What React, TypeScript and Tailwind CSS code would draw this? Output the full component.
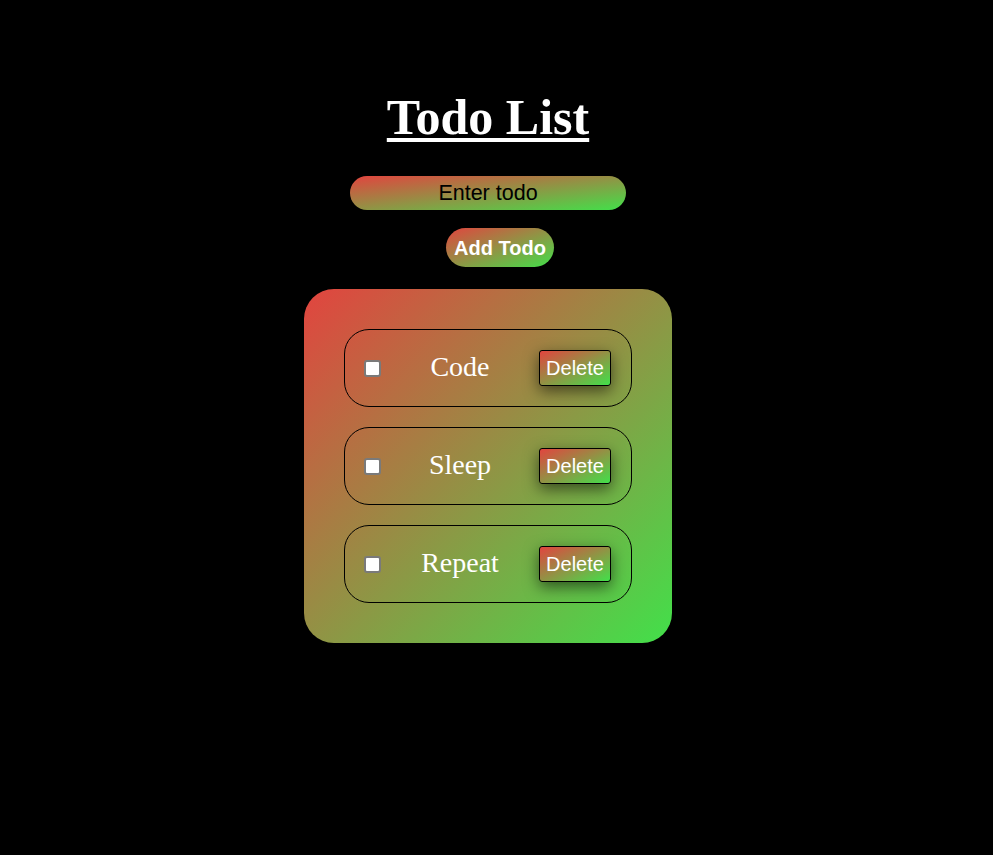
import React from "react";

const items = ["Code", "Sleep", "Repeat"];

export default function App() {
  return (
    <div className="min-h-[855px] w-full bg-black flex flex-col items-center pr-[17px] font-['Liberation_Sans',Arial,sans-serif]">
      <h1 className="mt-[89px] text-white font-bold underline text-[50px] leading-[57px] decoration-[4px] underline-offset-[4px] font-['Liberation_Serif',serif]">
        Todo List
      </h1>
      <input
        placeholder="Enter todo"
        className="mt-[30px] w-[276px] h-[34px] rounded-full bg-[linear-gradient(to_bottom_right,#e2443f,#42e04a)] text-center text-[21.5px] text-black placeholder:text-black outline-none"
      />
      <button className="mt-[18px] ml-[24px] w-[108px] h-[39px] rounded-full bg-[linear-gradient(to_bottom_right,#e2443f,#42e04a)] text-white font-bold text-[20px]">
        Add Todo
      </button>
      <div className="mt-[22px] w-[368px] rounded-[30px] p-[40px] flex flex-col gap-[20px] bg-[linear-gradient(to_bottom_right,#e2443f,#42e04a)]">
        {items.map((t) => (
          <div
            key={t}
            className="h-[78px] rounded-[25px] border border-black flex items-center pl-[19px] pr-[20px]"
          >
            <input
              type="checkbox"
              className="appearance-none w-[17px] h-[17px] m-0 rounded-[3px] border-2 border-[#7a7a7a] bg-white"
            />
            <span className="flex-1 text-center text-white text-[28px] pb-[3px] font-['Liberation_Serif',serif]">
              {t}
            </span>
            <button className="w-[72px] h-[36px] border border-black rounded-[3px] text-white text-[20px] bg-[linear-gradient(to_bottom_right,#e2443f,#42e04a)] shadow-[0_5px_15px_rgba(0,0,0,0.55)]">
              Delete
            </button>
          </div>
        ))}
      </div>
    </div>
  );
}
